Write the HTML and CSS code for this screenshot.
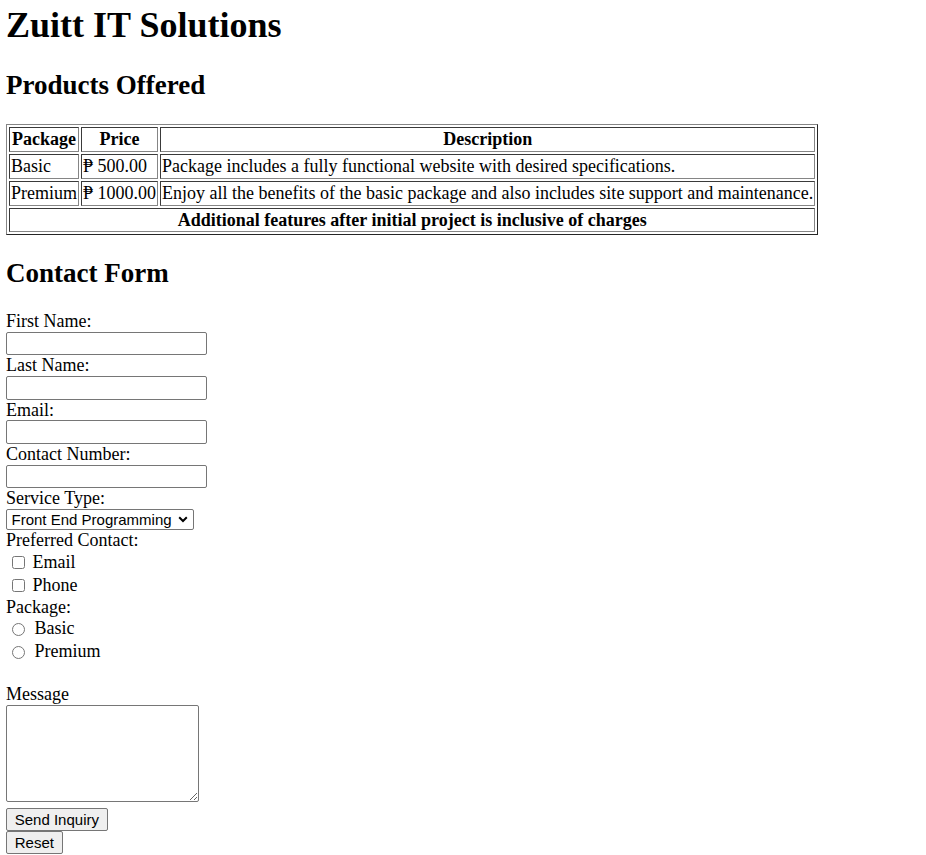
FILE: index.html
```html
<!DOCTYPE html>
<html lang="en">
<head>
<meta charset="utf-8">
<title>Zuitt IT Solutions</title>
<link rel="stylesheet" href="styles.css">
</head>
<body>
<h1 class="title">Zuitt IT Solutions</h1>
<h2 class="section">Products Offered</h2>
<table class="products">
  <tr>
    <th>Package</th>
    <th>Price</th>
    <th>Description</th>
  </tr>
  <tr>
    <td>Basic</td>
    <td>&#8369; 500.00</td>
    <td>Package includes a fully functional website with desired specifications.</td>
  </tr>
  <tr>
    <td>Premium</td>
    <td>&#8369; 1000.00</td>
    <td>Enjoy all the benefits of the basic package and also includes site support and maintenance.</td>
  </tr>
  <tr>
    <th colspan="3">Additional features after initial project is inclusive of charges</th>
  </tr>
</table>
<h2 class="section">Contact Form</h2>
<form class="contact">
  <label class="lbl" for="fname">First Name:</label>
  <input class="text-input" id="fname" type="text">
  <label class="lbl" for="lname">Last Name:</label>
  <input class="text-input" id="lname" type="text">
  <label class="lbl" for="email">Email:</label>
  <input class="text-input" id="email" type="email">
  <label class="lbl" for="phone">Contact Number:</label>
  <input class="text-input" id="phone" type="tel">
  <label class="lbl" for="service">Service Type:</label>
  <span class="select-wrap">
    <select class="service" id="service">
      <option>Front End Programming</option>
      <option>Back End Programming</option>
      <option>Full Stack Programming</option>
    </select>
    <svg class="chevron" width="10" height="7" viewBox="0 0 10 7" aria-hidden="true"><polyline points="1.2,1.3 5,5 8.8,1.3" fill="none" stroke="#000" stroke-width="2"/></svg>
  </span>
  <span class="lbl">Preferred Contact:</span>
  <label class="opt"><input class="check" type="checkbox"><span class="opt-text">Email</span></label>
  <label class="opt"><input class="check" type="checkbox"><span class="opt-text">Phone</span></label>
  <span class="lbl">Package:</span>
  <label class="opt"><input class="radio" type="radio" name="pkg"><span class="opt-text radio-text">Basic</span></label>
  <label class="opt"><input class="radio" type="radio" name="pkg"><span class="opt-text radio-text">Premium</span></label>
  <span class="blank"></span>
  <label class="lbl" for="msg">Message</label>
  <textarea class="message" id="msg"></textarea>
  <button class="btn btn-first" type="submit">Send Inquiry</button>
  <button class="btn" type="reset">Reset</button>
</form>
</body>
</html>
```
FILE: styles.css
```css
html, body {
  background: #ffffff;
}
body {
  margin: 0 0 0 6px;
  padding-top: 5px;
  font-family: "Liberation Serif", "Times New Roman", serif;
  font-size: 18px;
  color: #000000;
}
.title {
  font-size: 36px;
  font-weight: bold;
  line-height: 41.4px;
  margin: 0 0 24px 0;
}
.section {
  font-size: 27px;
  font-weight: bold;
  line-height: 31px;
  margin: 24px 0 23px 0;
}
.products {
  border-collapse: separate;
  border-spacing: 2px;
  border: 1px solid;
  border-color: #858585 #262626 #262626 #858585;
}
.products th,
.products td {
  border: 1px solid;
  border-color: #3a3a3a #858585 #858585 #3a3a3a;
  padding: 1px;
  line-height: 20.7px;
}
.products th {
  font-weight: bold;
  text-align: center;
}
.products td {
  text-align: left;
}
.products + .section {
  margin-top: 22.4px;
  margin-bottom: 22.4px;
}
.contact {
  display: flex;
  flex-direction: column;
  align-items: flex-start;
}
.lbl {
  display: block;
  height: 20.75px;
  line-height: 20.75px;
}
.text-input {
  box-sizing: border-box;
  width: 201px;
  height: 23.5px;
  margin: 0;
  padding: 1px 2px;
  border: 1px solid #767676;
  border-radius: 2px;
  background: #ffffff;
  font-family: "Liberation Sans", Arial, sans-serif;
  font-size: 15px;
}
.select-wrap {
  position: relative;
  display: block;
  height: 21px;
}
.service {
  display: block;
  box-sizing: border-box;
  width: 188px;
  height: 21px;
  margin: 0;
  padding: 0 0 0 4.5px;
  border: 1px solid #767676;
  border-radius: 2px;
  background-color: #ffffff;
  color: #000000;
  font-family: "Liberation Sans", Arial, sans-serif;
  font-size: 15px;
  -webkit-appearance: none;
  appearance: none;
}
.chevron {
  position: absolute;
  right: 6px;
  top: 7px;
  pointer-events: none;
}
.opt {
  display: flex;
  align-items: center;
  height: 23px;
}
.check {
  width: 13px;
  height: 13px;
  margin: 0 0 0 5.5px;
}
.radio {
  width: 13px;
  height: 13px;
  margin: 1px 0 0 6px;
}
.opt-text {
  margin-left: 8px;
  line-height: 20.75px;
}
.radio-text {
  margin-left: 9.5px;
}
.blank {
  display: block;
  height: 20.75px;
}
.message {
  box-sizing: border-box;
  width: 193px;
  height: 97px;
  margin: 0;
  padding: 2px;
  border: 1px solid #767676;
  border-radius: 2px;
  background: #ffffff;
  font-family: "Liberation Mono", monospace;
  font-size: 15px;
}
.btn {
  box-sizing: border-box;
  margin: 0;
  padding: 1.5px 7.75px;
  height: 22.75px;
  border: 1px solid #767676;
  border-radius: 2px;
  background: #efefef;
  color: #000000;
  font-family: "Liberation Sans", Arial, sans-serif;
  font-size: 15px;
  line-height: 17.25px;
}
.btn-first {
  margin-top: 6.5px;
}
```
